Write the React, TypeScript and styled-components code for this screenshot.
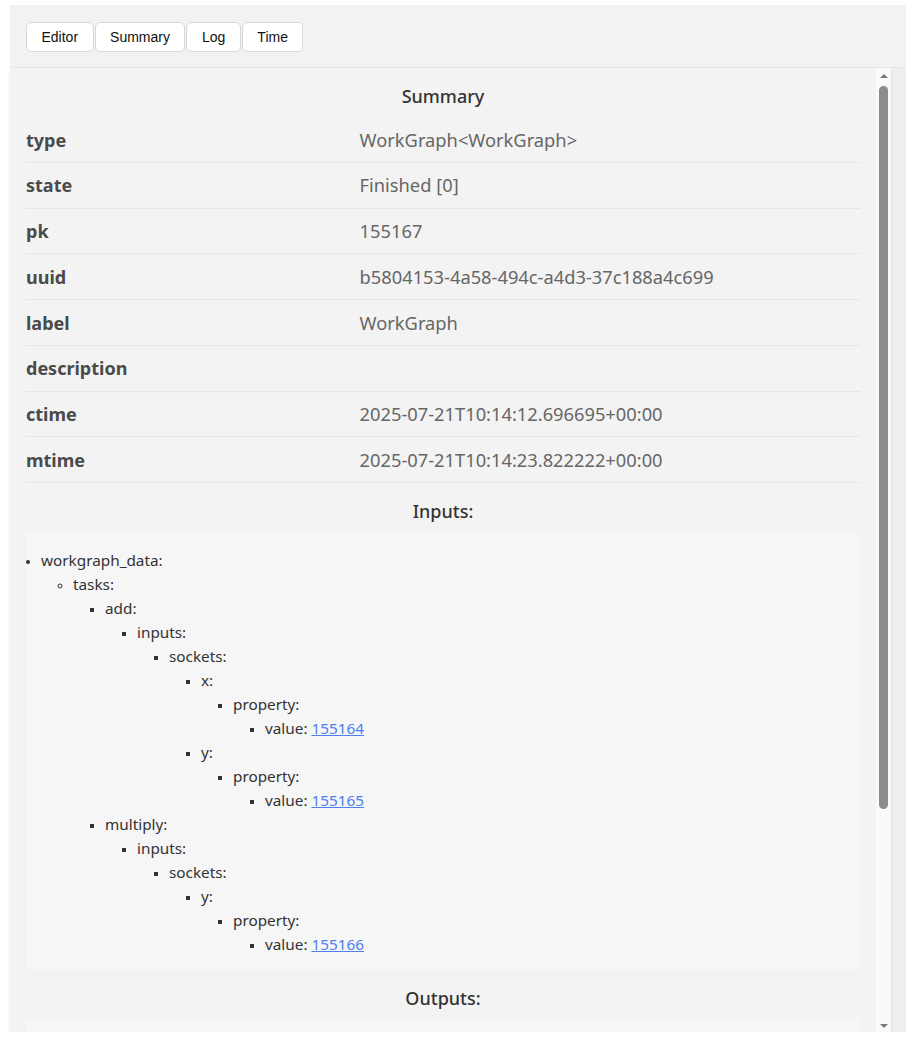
import React, { useLayoutEffect, useRef, useState } from "react";
import styled, { createGlobalStyle } from "styled-components";

const GlobalStyle = createGlobalStyle`
  html, body {
    margin: 0;
    padding: 0;
    background: #ffffff;
  }
  body {
    font-family: "Noto Sans", "Open Sans", sans-serif;
  }
`;

const Page = styled.div`
  padding: 5px 0 0 10px;
`;

const Frame = styled.div`
  height: 1027px;
  background: #f2f2f2;
  display: flex;
  flex-direction: column;
`;

const TabBar = styled.div`
  display: flex;
  gap: 1px;
  padding: 17px 16px 15px;
  border-bottom: 1px solid #e8e8e8;
  box-shadow: 0 1px 1px rgba(0, 0, 0, 0.03);
`;

const TabButton = styled.button`
  height: 30px;
  padding: 0 14.5px;
  border: 1px solid #d8d8d8;
  border-radius: 5px;
  background: #ffffff;
  color: #111;
  font-family: "Liberation Sans", Arial, sans-serif;
  font-size: 14px;
  cursor: pointer;
`;

const Body = styled.div`
  flex: 1;
  min-height: 0;
  display: flex;
  background: #eeeeee;
`;

const Panel = styled.div`
  width: 881px;
  display: flex;
  background: #f3f3f3;
  box-shadow: 0 2px 4px rgba(0, 0, 0, 0.08);
`;

const Scroller = styled.div`
  flex: 1;
  min-width: 0;
  overflow-y: scroll;
  scrollbar-width: none;
  padding: 0 16px;
  box-sizing: border-box;
  color: #333;
  &::-webkit-scrollbar {
    display: none;
  }
`;

/* hand-drawn vertical scrollbar next to the scrolling pane */
const ScrollTrack = styled.div`
  width: 15px;
  display: flex;
  flex-direction: column;
  background: #fafafa;
`;

const ArrowButton = styled.div<{ $down?: boolean }>`
  height: 15px;
  display: flex;
  align-items: center;
  justify-content: center;
  &::before {
    content: "";
    width: 0;
    height: 0;
    border-left: 4px solid transparent;
    border-right: 4px solid transparent;
    ${(p) =>
      p.$down
        ? "border-top: 4px solid #7a7a7a; margin-top: 2px;"
        : "border-bottom: 4px solid #7a7a7a; margin-top: 1px;"}
  }
`;

const ThumbArea = styled.div`
  flex: 1;
  min-height: 0;
  padding: 3px 3px;
`;

const Thumb = styled.div`
  width: 9px;
  border-radius: 5px;
  background: #8c8c8c;
`;

const SectionTitle = styled.div`
  text-align: center;
  font-size: 18px;
  font-weight: 500;
  line-height: 22px;
  padding: 17px 0 10px;
  color: #333;
`;

const InfoTable = styled.div`
  display: flex;
  flex-direction: column;
`;

const InfoRow = styled.div`
  display: grid;
  grid-template-columns: 40% 60%;
  border-bottom: 1px solid #e6e6e6;
  padding: 11.5px 0 11.25px;
  line-height: 22px;
`;

const Key = styled.div`
  font-size: 18px;
  font-weight: 700;
  color: #4a4a4a;
`;

const Value = styled.div`
  font-size: 18.3px;
  color: #666;
`;

const TreeBox = styled.div`
  background: #f6f6f6;
  overflow: hidden;
  font-size: 15.3px;
  line-height: 24px;
  color: #333;
`;

const Tree = styled.ul<{ $root?: boolean }>`
  margin: ${(p) => (p.$root ? "16px 0 14px" : "0")};
  padding-left: ${(p) => (p.$root ? "15px" : "32px")};
  list-style-type: ${(p) => (p.$root ? "disc" : "square")};
  & > li::marker {
    font-size: 11px;
  }
`;

const CircleTree = styled(Tree)`
  list-style-type: circle;
`;

const Link = styled.a`
  color: #4a80f0;
  text-decoration: underline;
`;

type Node = { label: string; link?: string; children?: Node[] };

const inputs: Node[] = [
  {
    label: "workgraph_data:",
    children: [
      {
        label: "tasks:",
        children: [
          {
            label: "add:",
            children: [
              {
                label: "inputs:",
                children: [
                  {
                    label: "sockets:",
                    children: [
                      {
                        label: "x:",
                        children: [
                          { label: "property:", children: [{ label: "value: ", link: "155164" }] },
                        ],
                      },
                      {
                        label: "y:",
                        children: [
                          { label: "property:", children: [{ label: "value: ", link: "155165" }] },
                        ],
                      },
                    ],
                  },
                ],
              },
            ],
          },
          {
            label: "multiply:",
            children: [
              {
                label: "inputs:",
                children: [
                  {
                    label: "sockets:",
                    children: [
                      {
                        label: "y:",
                        children: [
                          { label: "property:", children: [{ label: "value: ", link: "155166" }] },
                        ],
                      },
                    ],
                  },
                ],
              },
            ],
          },
        ],
      },
    ],
  },
];

const outputs: Node[] = [
  {
    label: "new_data:",
    children: [
      { label: "add:", children: [{ label: "result: ", link: "155169" }] },
      { label: "multiply:", children: [{ label: "result: ", link: "155171" }] },
    ],
  },
  { label: "execution_count: ", link: "155172" },
  { label: "remote_folder: ", link: "155168" },
  { label: "retrieved: ", link: "155170" },
  { label: "sum: ", link: "155173" },
  { label: "product: ", link: "155174" },
];

function renderNodes(nodes: Node[], depth: number): React.ReactNode {
  const items = nodes.map((n, i) => (
    <li key={i}>
      {n.label}
      {n.link && <Link href="#">{n.link}</Link>}
      {n.children && renderNodes(n.children, depth + 1)}
    </li>
  ));
  if (depth === 0) return <Tree $root>{items}</Tree>;
  if (depth === 1) return <CircleTree>{items}</CircleTree>;
  return <Tree>{items}</Tree>;
}

const summary: [string, string][] = [
  ["type", "WorkGraph<WorkGraph>"],
  ["state", "Finished [0]"],
  ["pk", "155167"],
  ["uuid", "b5804153-4a58-494c-a4d3-37c188a4c699"],
  ["label", "WorkGraph"],
  ["description", ""],
  ["ctime", "2025-07-21T10:14:12.696695+00:00"],
  ["mtime", "2025-07-21T10:14:23.822222+00:00"],
];

const BottomSpacer = styled.div`
  height: 16px;
`;

export default function App() {
  const scrollRef = useRef<HTMLDivElement>(null);
  const areaRef = useRef<HTMLDivElement>(null);
  const [thumb, setThumb] = useState({ top: 0, height: 0 });

  useLayoutEffect(() => {
    const el = scrollRef.current;
    const area = areaRef.current;
    if (!el || !area) return;
    const update = () => {
      const avail = area.clientHeight - 6;
      const ratio = el.clientHeight / el.scrollHeight;
      const height = Math.max(20, avail * Math.min(1, ratio));
      const maxScroll = el.scrollHeight - el.clientHeight;
      const top = maxScroll > 0 ? (el.scrollTop / maxScroll) * (avail - height) : 0;
      setThumb({ top, height });
    };
    update();
    el.addEventListener("scroll", update);
    return () => el.removeEventListener("scroll", update);
  }, []);

  return (
    <>
      <GlobalStyle />
      <Page>
        <Frame>
          <TabBar>
            <TabButton>Editor</TabButton>
            <TabButton>Summary</TabButton>
            <TabButton>Log</TabButton>
            <TabButton>Time</TabButton>
          </TabBar>
          <Body>
            <Panel>
              <Scroller ref={scrollRef}>
                <SectionTitle>Summary</SectionTitle>
                <InfoTable>
                  {summary.map(([k, v]) => (
                    <InfoRow key={k}>
                      <Key>{k}</Key>
                      <Value>{v}</Value>
                    </InfoRow>
                  ))}
                </InfoTable>
                <SectionTitle>Inputs:</SectionTitle>
                <TreeBox>{renderNodes(inputs, 0)}</TreeBox>
                <SectionTitle>Outputs:</SectionTitle>
                <TreeBox>{renderNodes(outputs, 0)}</TreeBox>
                <BottomSpacer />
              </Scroller>
              <ScrollTrack>
                <ArrowButton />
                <ThumbArea ref={areaRef}>
                  <Thumb style={{ marginTop: thumb.top, height: thumb.height }} />
                </ThumbArea>
                <ArrowButton $down />
              </ScrollTrack>
            </Panel>
          </Body>
        </Frame>
      </Page>
    </>
  );
}
